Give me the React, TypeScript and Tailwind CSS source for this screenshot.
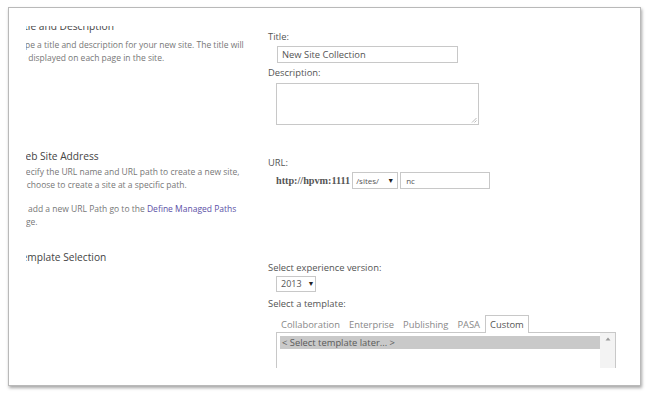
const font = { fontFamily: '"Open Sans", "Noto Sans", sans-serif' };

const Field = ({ className, children }: { className: string; children?: React.ReactNode }) => (
  <div className={'border border-[#c8c8c8] bg-white ' + className}>{children}</div>
);

const App = () => {
  return (
    <div className="w-[650px] h-[394px] bg-white overflow-hidden" style={font}>
      <div className="ml-[8px] mt-[7px] w-[633px] h-[379px] border border-[#b9b9b9] bg-white shadow-[1px_2px_3px_rgba(0,0,0,0.35)] pl-[17px] pt-[18px]">
        {/* clipped content area */}
        <div className="w-[600px] h-[342px] overflow-hidden">
          <div className="-ml-[10px] -mt-[5px] w-[612px]">
            {/* Title and Description */}
            <div className="flex h-[128px]">
              <div className="w-[252px]">
                <div className="-mt-[2px] text-[10.2px] leading-[14px] text-[#444]">Title and Description</div>
                <div className="mt-[5px] text-[8.5px] leading-[13px] text-[#777] whitespace-nowrap">
                  <div>Type a title and description for your new site. The title will</div>
                  <div>be displayed on each page in the site.</div>
                </div>
              </div>
              <div className="pt-[9px] text-[9.4px] leading-[14px] text-[#555]">
                <div>Title:</div>
                <Field className="mt-[2px] ml-[9px] w-[181px] h-[17px] px-[4px] leading-[15px] text-[#555]">New Site Collection</Field>
                <div className="mt-[3px]">Description:</div>
                <Field className="mt-[3px] ml-[8px] w-[203px] h-[42px] relative">
                  <svg className="absolute right-[1px] bottom-[1px]" width="6" height="6" viewBox="0 0 6 6">
                    <path d="M5.5 1 L1 5.5 M5.5 3.5 L3.5 5.5" stroke="#aaa" strokeWidth="0.8" />
                  </svg>
                </Field>
              </div>
            </div>

            {/* Web Site Address */}
            <div className="flex h-[101px]">
              <div className="w-[252px]">
                <div className="text-[10.2px] leading-[14px] text-[#444]">Web Site Address</div>
                <div className="mt-[2px] text-[8.5px] leading-[13px] text-[#777] whitespace-nowrap">
                  <div>Specify the URL name and URL path to create a new site,</div>
                  <div>or choose to create a site at a specific path.</div>
                </div>
                <div className="mt-[11px] text-[8.5px] leading-[13px] text-[#777] whitespace-nowrap">
                  <div>
                    To add a new URL Path go to the <span className="text-[#5b4fa6]">Define Managed Paths</span>
                  </div>
                  <div>page.</div>
                </div>
              </div>
              <div className="pt-[7px] text-[9.4px] leading-[14px] text-[#555]">
                <div>URL:</div>
                <div className="mt-[2px] ml-[8px] flex items-center h-[17px]">
                  <span className="font-bold text-[#555] text-[10.2px]" style={{ fontFamily: '"Liberation Serif", serif' }}>http://hpvm:1111</span>
                  <Field className="ml-[2px] w-[46px] h-[17px] flex items-center justify-between px-[3px] text-[8px] text-[#555]">
                    <span>/sites/</span>
                    <span className="text-[7px] text-[#222]">▼</span>
                  </Field>
                  <Field className="ml-[2px] w-[90px] h-[17px] px-[5px] text-[8px] leading-[15px] text-[#555]">nc</Field>
                </div>
              </div>
            </div>

            {/* Template Selection */}
            <div className="flex">
              <div className="w-[252px]">
                <div className="text-[10.2px] leading-[14px] text-[#444]">Template Selection</div>
              </div>
              <div className="pt-[11px] text-[9.4px] leading-[14px] text-[#555]">
                <div>Select experience version:</div>
                <Field className="mt-[1px] ml-[8px] w-[40px] h-[16px] flex items-center px-[4px] gap-[6px] text-[9px]">
                  <span>2013</span>
                  <span className="text-[7px] text-[#222]">▼</span>
                </Field>
                <div className="mt-[5px]">Select a template:</div>
                <div className="mt-[3px] ml-[8px] flex items-end h-[18px] text-[#888]">
                  <span className="ml-[5px]">Collaboration</span>
                  <span className="ml-[9px]">Enterprise</span>
                  <span className="ml-[9px]">Publishing</span>
                  <span className="ml-[9px]">PASA</span>
                  <span className="ml-[5px] h-[18px] border border-b-0 border-[#c8c8c8] bg-white px-[4px] leading-[17px] text-[#555] relative top-[1px]">Custom</span>
                </div>
                <Field className="ml-[8px] w-[340px] h-[60px] flex p-[3px] pr-0">
                  <div className="w-[321px] h-[13px] bg-[#c9c9c9] px-[2px] leading-[13px] text-[#5a5a5a]">&lt; Select template later... &gt;</div>
                  <div className="ml-auto -mt-[3px] w-[15px] h-[60px] bg-[#f3f3f3] flex justify-center pt-[4px]">
                    <svg width="6" height="4" viewBox="0 0 6 4">
                      <path d="M3 0.5 L5.5 3.5 L0.5 3.5 Z" fill="#999" />
                    </svg>
                  </div>
                </Field>
              </div>
            </div>
          </div>
        </div>
      </div>
    </div>
  );
};

export default App;
